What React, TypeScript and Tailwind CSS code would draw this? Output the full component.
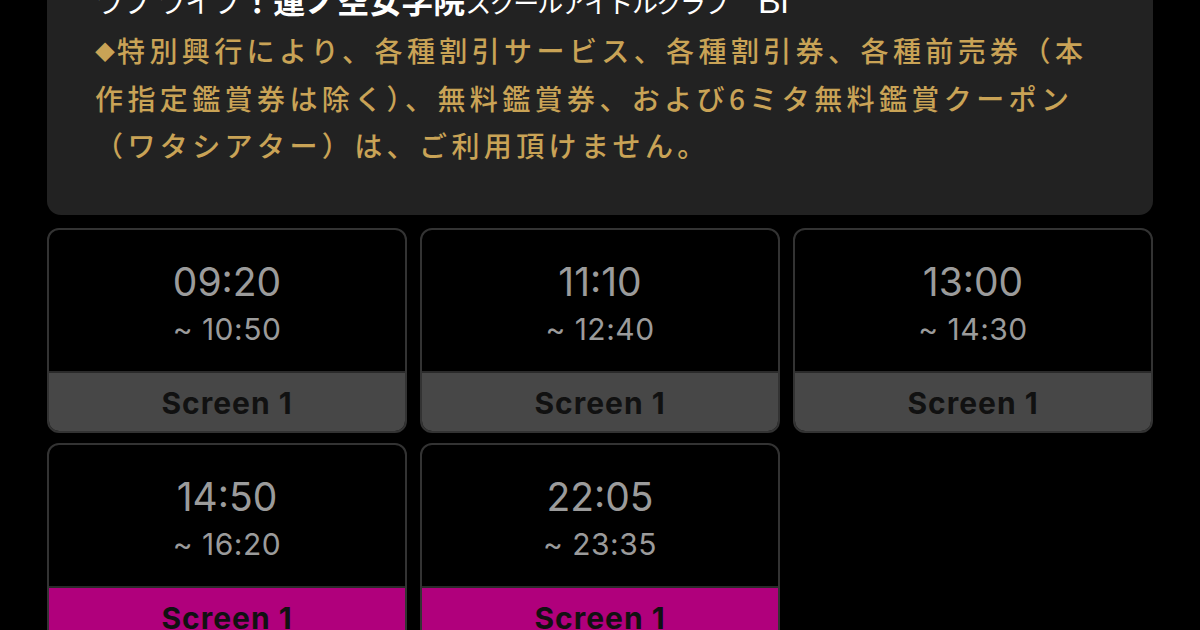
import React from "react";

const shows = [
  { start: "09:20", end: "~ 10:50", hot: false },
  { start: "11:10", end: "~ 12:40", hot: false },
  { start: "13:00", end: "~ 14:30", hot: false },
  { start: "14:50", end: "~ 16:20", hot: true },
  { start: "22:05", end: "~ 23:35", hot: true },
];

export default function App() {
  return (
    <div className="w-[1200px] h-[630px] overflow-hidden bg-black px-[47px]">
      <div
        className="-mt-[30px] pt-[9px] pb-[46px] pl-[48px] pr-[20px] bg-[#222222] rounded-b-[14px]"
        style={{ fontFamily: '"Noto Sans CJK JP", "Noto Sans", sans-serif' }}
      >
        <div className="h-[40px] leading-[40px] text-white whitespace-nowrap">
          <span className="text-[28px]">ラブ ライブ</span>
          <span className="text-[32px] font-bold">！蓮ノ空女学院</span>
          <span className="text-[26px] tracking-[-2px]">スクールアイドルクラブ</span>
          <span className="text-[34px] ml-[30px]" style={{ fontFamily: '"Liberation Sans", sans-serif' }}>Bl</span>
        </div>
        <p className="mt-[8px] text-[28px] leading-[47px] tracking-[4.4px] text-[#c9a356] font-medium whitespace-nowrap">
          <span className="text-[20px] tracking-[0px] mr-[2px] align-[2px]">◆</span>特別興行により、各種割引サービス、各種割引券、各種前売券（本
          <br />
          作指定鑑賞券は除く）、無料鑑賞券、および6ミタ無料鑑賞クーポン
          <br />
          （ワタシアター）は、ご利用頂けません。
        </p>
      </div>
      <div className="grid grid-cols-3 gap-x-[13px] gap-y-[10px] mt-[13px]">
        {shows.map((s) => (
          <div
            key={s.start}
            className="rounded-[12px] border-2 border-[#333333] overflow-hidden bg-black flex flex-col"
            style={{ fontFamily: 'Inter, "Open Sans", sans-serif' }}
          >
            <div className="h-[141px] flex flex-col items-center pt-[29px]">
              <div className="text-[39px] leading-[46px] text-[#9b9b9b] tracking-[0px]">{s.start}</div>
              <div className="text-[30px] leading-[40px] mt-[4px] text-[#9b9b9b] tracking-[0.5px]">{s.end}</div>
            </div>
            <div
              className={
                "h-[60px] pt-[3px] border-t-2 border-[#2a2a2a] flex items-center justify-center text-[30px] font-bold tracking-[1px] text-[#111111] " +
                (s.hot ? "bg-[#b0007c]" : "bg-[#474747]")
              }
            >
              Screen 1
            </div>
          </div>
        ))}
      </div>
    </div>
  );
}
